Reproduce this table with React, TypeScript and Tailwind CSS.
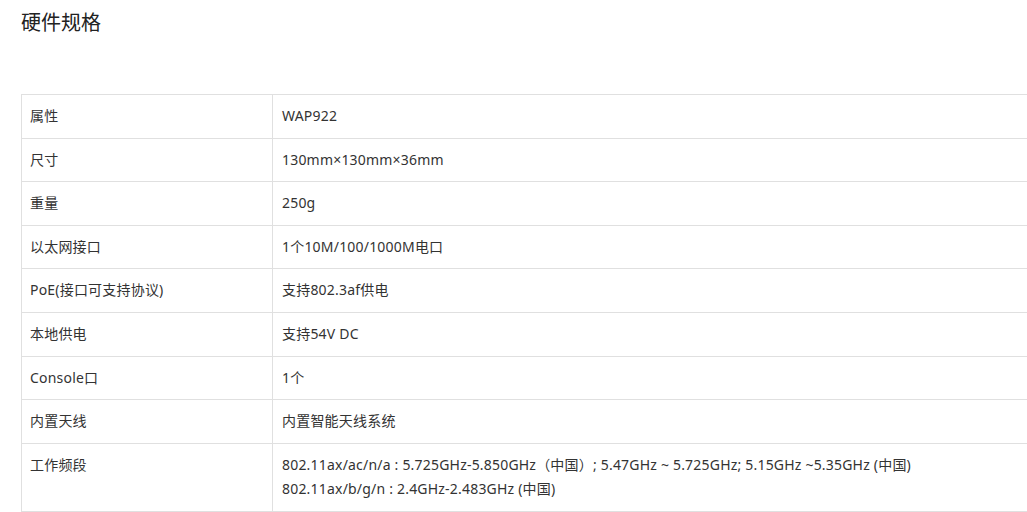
import React from "react";

const rows: [string, React.ReactNode][] = [
  ["属性", "WAP922"],
  ["尺寸", "130mm×130mm×36mm"],
  ["重量", "250g"],
  ["以太网接口", "1个10M/100/1000M电口"],
  ["PoE(接口可支持协议)", "支持802.3af供电"],
  ["本地供电", "支持54V DC"],
  ["Console口", "1个"],
  ["内置天线", "内置智能天线系统"],
  [
    "工作频段",
    <>
      <div className="h-[23.8px]">802.11ax/ac/n/a : 5.725GHz-5.850GHz（中国）; 5.47GHz ~ 5.725GHz; 5.15GHz ~5.35GHz (中国)</div>
      <div className="h-[23.8px]">802.11ax/b/g/n : 2.4GHz-2.483GHz (中国)</div>
    </>,
  ],
];

export default function App() {
  return (
    <div
      className="w-[1027px] h-[512px] overflow-hidden bg-white text-[#333]"
      style={{ fontFamily: '"Noto Sans", "Noto Sans CJK SC", sans-serif' }}
    >
      <div className="pl-[21px] pt-[8px]">
        <h2 className="text-[20px] leading-[30px] text-[#222] font-normal">硬件规格</h2>
        <table className="mt-[56px] w-[1100px] border-collapse text-[14px] leading-[22.6px] tracking-[0.2px]">
          <tbody>
            {rows.map(([k, v], i) => (
              <tr key={i}>
                <td className="w-[251px] border border-[#e0e0e0] px-[8px] py-[10px] align-top">{k}</td>
                <td className="border border-[#e0e0e0] px-[9px] py-[10px] align-top">{v}</td>
              </tr>
            ))}
          </tbody>
        </table>
      </div>
    </div>
  );
}
